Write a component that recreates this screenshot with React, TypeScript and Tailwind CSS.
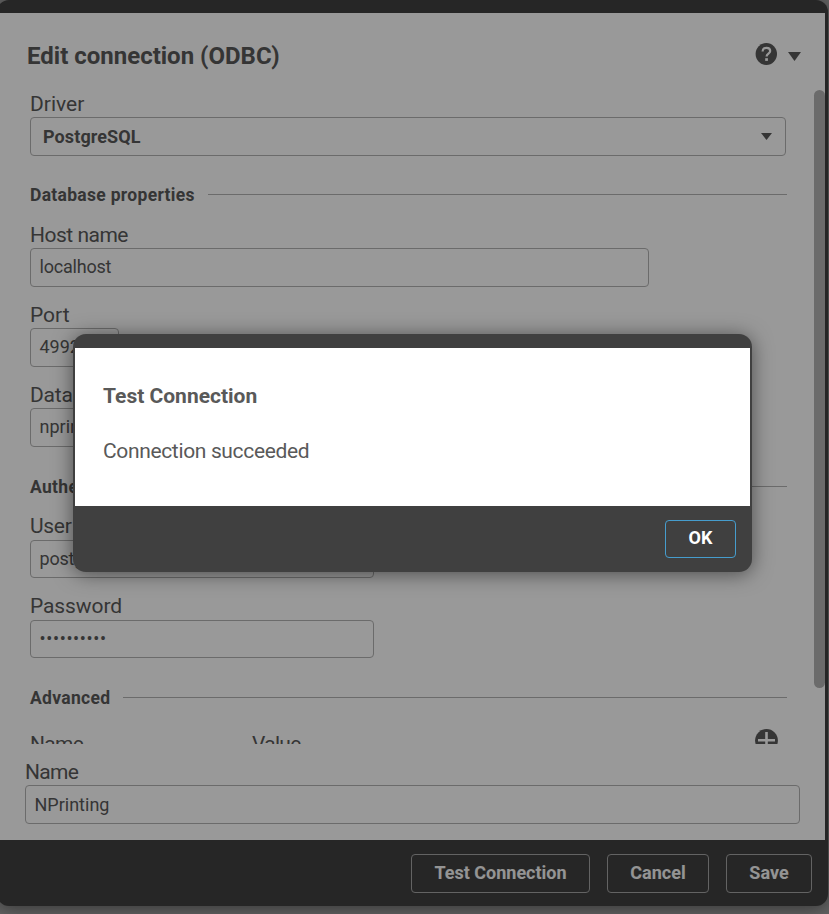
import React from 'react';
import { clsx } from 'clsx';

interface FieldProps {
  label: string;
  value: string;
  className?: string;
  labelClassName?: string;
  inputClassName?: string;
  textClassName?: string;
}

function Field({ label, value, className, labelClassName, inputClassName, textClassName }: FieldProps) {
  return (
    <div className={className}>
      <div className={clsx('h-[27px] text-[21px]', labelClassName)}>{label}</div>
      <div
        className={clsx(
          'flex items-center whitespace-nowrap rounded-[4px] border border-[#b3b3b3] pl-[8.5px] text-[18px]',
          inputClassName
        )}
      >
        <span className={textClassName}>{value}</span>
      </div>
    </div>
  );
}

function SectionTitle({ title, className }: { title: string; className?: string }) {
  return (
    <div className={clsx('flex h-[27px] w-[757px] items-center gap-[13px]', className)}>
      <h2 className="text-[17.5px] font-bold leading-[27px] tracking-[0.3px]">
        <span className="relative top-px">{title}</span>
      </h2>
      <div className="h-px flex-1 bg-[#b3b3b3]" />
    </div>
  );
}

function HelpIcon() {
  return (
    <svg width="22" height="22" viewBox="0 0 22 22" fill="none">
      <ellipse cx="11.3" cy="11" rx="10.7" ry="11" fill="currentColor" />
      <path d="M7.6 8.4C7.6 6 9 4.9 11.4 4.9s3.8 1.2 3.8 3.2c0 2.7-3.6 2.6-3.6 5.5" stroke="white" strokeWidth="2.2" />
      <rect x="10.2" y="15.2" width="2.7" height="2.7" fill="white" />
    </svg>
  );
}

function AddIcon() {
  return (
    <svg width="23" height="23" viewBox="0 0 23 23" fill="none">
      <circle cx="11.5" cy="11.5" r="11.4" fill="currentColor" />
      <path d="M11.5 3v17M3 11.2h17" stroke="white" strokeWidth="2.6" />
    </svg>
  );
}

function Caret({ className }: { className?: string }) {
  return (
    <svg className={className} viewBox="0 0 12 8" preserveAspectRatio="none">
      <path d="M0 0h12L6 8z" fill="currentColor" />
    </svg>
  );
}

function FooterButton({ label, className }: { label: string; className?: string }) {
  return (
    <button
      className={clsx(
        'h-[39px] whitespace-nowrap rounded-[4px] border border-[#a6a6a6] pb-[2px] text-[18px] font-bold text-[#f7f7f7]',
        className
      )}
    >
      {label}
    </button>
  );
}

function ConnectionDialog() {
  return (
    <div className="-ml-[3px] flex h-[906px] w-[831px] flex-col rounded-[12px] bg-[#404040] pl-[3px] pt-[13px] shadow-[0_2px_20px_rgba(0,0,0,0.5)]">
      <div className="h-[827px] w-[825px] bg-white">
        <header className="flex h-[77px] items-start pl-[27px]">
          <h1 className="mt-[27px] text-[24px] font-bold leading-8">Edit connection (ODBC)</h1>
          <div className="ml-auto mr-[24px] mt-[30px] flex">
            <HelpIcon />
            <Caret className="ml-[11px] mt-[9px] h-[9px] w-[13px]" />
          </div>
        </header>

        <div className="flex h-[654px] overflow-hidden pl-[30px]">
          <div className="w-[757px]">
            <div className="h-[27px] text-[21px] leading-[28px]">Driver</div>
            <div className="flex h-[39px] w-[756px] items-center justify-between rounded-[4px] border border-[#b3b3b3] pl-3 pr-[13px] text-[18px] font-bold tracking-[0.1px]">
              PostgreSQL
              <Caret className="h-[7px] w-[11px]" />
            </div>

            <SectionTitle title="Database properties" className="mt-[25px]" />
            <Field
              label="Host name"
              value="localhost"
              className="mt-[13px]"
              labelClassName="leading-[28px] tracking-[-0.5px]"
              inputClassName="h-[39px] w-[619px] pb-[2px]"
              textClassName="tracking-[-0.2px]"
            />
            <Field
              label="Port"
              value="4992"
              className="mt-[14px]"
              labelClassName="leading-[28px]"
              inputClassName="h-[39px] w-[89px] pb-[2px]"
            />
            <Field
              label="Database"
              value="nprinting"
              className="mt-[14px]"
              labelClassName="leading-[28px] tracking-[-0.2px]"
              inputClassName="h-[39px] w-[344px] pb-[2px]"
            />

            <SectionTitle title="Authentication" className="mt-[26px]" />
            <Field
              label="User name"
              value="postgres"
              className="mt-[13px]"
              labelClassName="leading-[26px] tracking-[-0.3px]"
              inputClassName="h-[38px] w-[344px] pb-px"
              textClassName="tracking-[-0.2px]"
            />
            <Field
              label="Password"
              value="••••••••••"
              className="mt-[15px]"
              labelClassName="leading-[26px] tracking-[-0.1px]"
              inputClassName="h-[38px] w-[344px] pb-px"
              textClassName="tracking-[0.65px]"
            />

            <SectionTitle title="Advanced" className="mt-[26px]" />
            <div className="mt-[18px] flex text-[21px] leading-[31px] tracking-[-0.7px]">
              <div className="w-[222px]">Name</div>
              <div>Value</div>
              <div className="ml-auto mr-[9px]">
                <AddIcon />
              </div>
            </div>
          </div>
          <div className="ml-auto h-[598px] w-[11px] rounded-full bg-[#b3b3b3]" />
        </div>

        <Field
          label="Name"
          value="NPrinting"
          className="mt-[14px] pl-[25px]"
          labelClassName="leading-[28px] tracking-[-0.7px]"
          inputClassName="h-[39px] w-[775px]"
        />
      </div>

      <footer className="flex gap-[17px] pl-[411px] pt-[14px]">
        <FooterButton label="Test Connection" className="w-[179px]" />
        <FooterButton label="Cancel" className="w-[102px]" />
        <FooterButton label="Save" className="w-[86px]" />
      </footer>
    </div>
  );
}

function ResultDialog() {
  return (
    <div className="absolute left-[73px] top-[334px] h-[238px] w-[679px] rounded-[13px] bg-[#404040] px-[2px] pt-[14px] shadow-[0_2px_20px_rgba(0,0,0,0.5)]">
      <div className="h-[158px] bg-white pl-[28px] pt-[33px]">
        <h2 className="text-[21px] font-bold leading-[30px]">Test Connection</h2>
        <p className="mt-[25px] text-[21px] leading-[30px] tracking-[-0.35px]">Connection succeeded</p>
      </div>
      <div className="flex justify-end pr-[14px] pt-[14px]">
        <button className="h-[38px] w-[71px] rounded-[4px] border border-[#469dcd] pb-[3px] text-[18px] font-bold text-white">
          OK
        </button>
      </div>
    </div>
  );
}

export default function App() {
  return (
    <div className="relative h-[914px] w-[829px] overflow-hidden bg-[#a8a8a8] font-['Roboto','Liberation_Sans',sans-serif] text-[#595959]">
      <ConnectionDialog />
      <div className="absolute inset-0 bg-black/40" />
      <ResultDialog />
    </div>
  );
}
